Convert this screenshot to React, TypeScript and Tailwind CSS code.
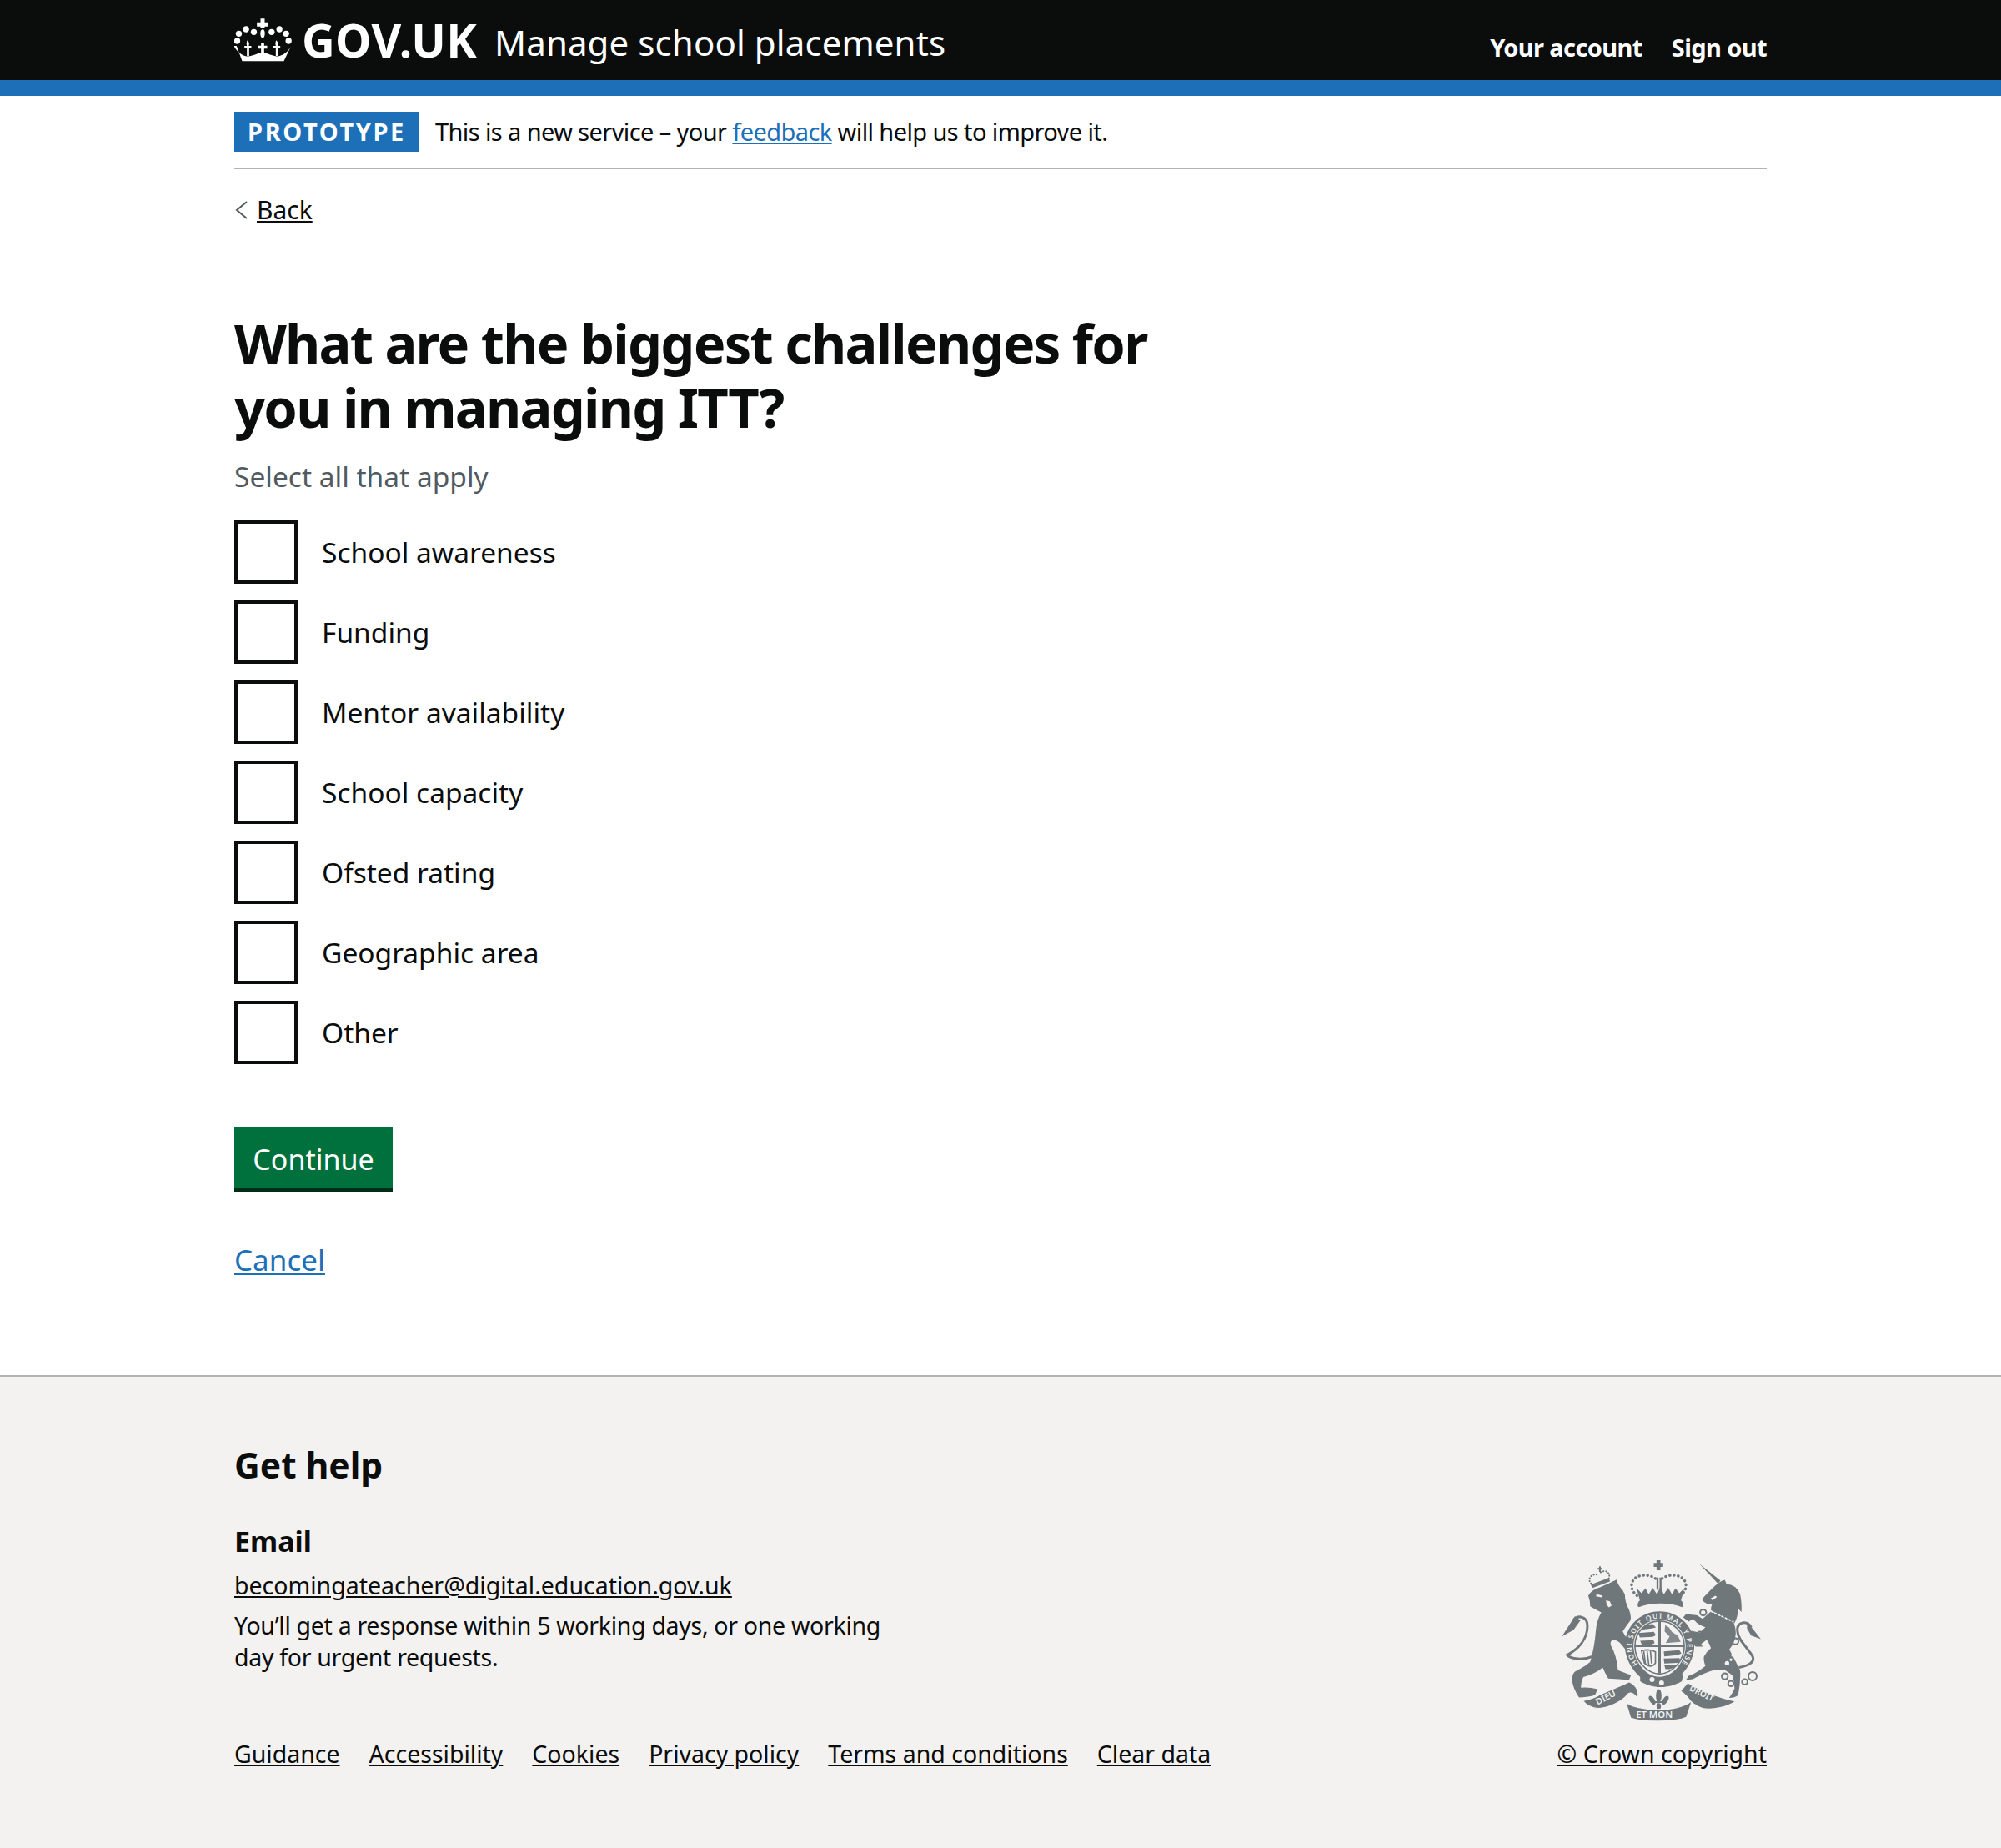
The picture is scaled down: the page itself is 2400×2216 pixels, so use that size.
import React from "react";

const options = [
  "School awareness",
  "Funding",
  "Mentor availability",
  "School capacity",
  "Ofsted rating",
  "Geographic area",
  "Other",
];

const footerLinks = [
  "Guidance",
  "Accessibility",
  "Cookies",
  "Privacy policy",
  "Terms and conditions",
  "Clear data",
];

const CrownLogo = () => (
  <svg viewBox="36 26 208 162" className="w-[71px] h-[54px] fill-white" aria-hidden="true">
    {/* top cross and jewel */}
    <path d="M128 30h15v13h13v15h-13v5h-15v-5h-13V43h13z" />
    <ellipse cx="135.5" cy="84" rx="8" ry="15" />
    <circle cx="76" cy="68" r="11" />
    <circle cx="104" cy="78" r="11" />
    <circle cx="50" cy="84" r="11" />
    <circle cx="44" cy="110" r="11" />
    <circle cx="168" cy="78" r="11" />
    <circle cx="196" cy="68" r="11" />
    <circle cx="220" cy="84" r="11" />
    <circle cx="229" cy="110" r="11" />
    {/* band */}
    <path d="M42 128l20 55h150l26-55c-10 20-25 34-50 38-16-2-34-10-53-16-18 6-36 14-52 16-24-3-40-18-51-38z" />
    {/* fleurs on the band */}
    <path d="M130 116h11v11h11v11h-11v14h-11v-14h-11v-11h11z" />
    <path d="M81 108c6 6 7 12 5 20h9v9h-8v28h-8v-28h-9v-9h9c-2-8 -2-14 2-20z" />
    <path d="M185 108c6 6 7 12 5 20h9v9h-8v28h-8v-28h-9v-9h9c-2-8 -2-14 2-20z" />
  </svg>
);

const Crest = ({ className }: { className: string }) => (
  <svg viewBox="100 78 722 592" className={className} aria-hidden="true">
    <defs>
      <path id="garterRing" d="M378 457A100 100 0 1 1 532 457" />
      <clipPath id="shieldClip">
        <path d="M366 392A89 89 0 0 1 544 392C544 444 504 490 455 494 406 490 366 444 366 392Z" />
      </clipPath>
    </defs>
    <g fill="#6f777b">
      {/* lion crown */}
      <path d="M207 172l64-24 6 12-64 24z" />
      <path d="M232 112h5v-6h6v6h6v6h-6v8h-6v-8h-5z" />
      {/* lion */}
      <path d="M198 212Q210 190 240 182 272 168 300 154 305 175 322 192L330 208Q330 235 345 262 354 285 350 300 335 320 322 340 340 370 352 395 365 420 358 432L345 428Q335 405 318 388 300 368 285 372 275 376 280 392 300 425 305 480 330 490 352 498L345 515Q310 512 270 510 258 490 250 470 225 492 180 505 170 525 172 543 200 540 232 548L222 570Q190 578 165 578 145 550 140 520 138 495 150 485 190 465 205 450 220 400 225 340 228 300 245 272 225 262 205 250 205 230 198 212Z" />
      <path d="M150 285L103 358l42-23 25-35z" />
      {/* unicorn */}
      <path d="M598 97l76 60-8 12z" />
      <path d="M668 165Q680 158 690 155L696 170Q730 172 745 205 752 240 750 270L738 258Q738 285 725 310L640 264Q640 250 645 240L625 240Q612 235 608 224 625 205 640 190 655 175 668 165Z" />
      <path d="M640 268L722 308Q738 350 720 385 712 398 706 405 725 440 745 480 748 520 738 570 725 580 705 580 720 560 725 545 722 515 718 500 700 485 690 480 670 478 650 480 615 490 575 512L550 515 560 500Q590 490 620 465 612 445 615 430 625 412 640 400 635 385 625 370L605 385 610 395 585 395Q565 375 555 355L570 338 600 345 620 325Q600 318 590 310L575 295 560 305 540 290 550 278 590 282 610 295Z" />
      <path d="M770 305l50 63-35-13-15-25z" />
      {/* big crown */}
      <path d="M444 84h14v10h10v14h-10v12h-14v-12h-10V94h10z" />
      <path d="M444 146h7v44h-7zM455 146h7v44h-7z" />
      <path d="M380 253c-8-4-2-22 4-24l-12-44 18 18 14-18 12 22 14-24 16 24 12-30 12 30 16-24 14 24 12-22 14 18 18-18-12 44c6 2 12 20 4 24-46-18-108-18-156 0z" />
      {/* fleur below the shield */}
      <ellipse cx="452" cy="572" rx="10" ry="24" />
      <ellipse cx="428" cy="588" rx="9" ry="18" transform="rotate(-32 428 588)" />
      <ellipse cx="476" cy="588" rx="9" ry="18" transform="rotate(32 476 588)" />
      <path d="M428 592h48v6h-48z" />
      <ellipse cx="452" cy="610" rx="8" ry="11" />
      {/* garter */}
      <path fillRule="evenodd" d="M455 268c70 0 125 54 125 124 0 62-56 140-125 140-70 0-125-78-125-140 0-70 55-124 125-124zm0 30c-54 0-94 42-94 94 0 50 40 112 94 112s94-62 94-112c0-52-40-94-94-94z" />
      <path d="M385 492c40 26 100 26 156 0l-6 28c-46 28-106 28-150 0z" />
    </g>
    {/* shield */}
    <path d="M366 392A89 89 0 0 1 544 392C544 444 504 490 455 494 406 490 366 444 366 392Z" fill="#f3f2f1" stroke="#6f777b" strokeWidth="5" />
    <g clipPath="url(#shieldClip)">
      <path d="M366 392h178M455 302v190" stroke="#6f777b" strokeWidth="9" fill="none" />
      <g fill="#6f777b">
        <path d="M378 318l52-4 12 12-16 4-36 4zM378 346l56-4 8 12-12 6-46 2zM385 374l48-2 4 10-12 6-34 0z" />
        <path d="M475 318l14 8 10 16 22 14 10 22-54 4 14-24-18-18z" opacity="0.85" />
        <path d="M470 412l56-4 8 12-16 6-46 4zM470 438l56-2 6 12-14 6-46 2zM472 462l40-2 4 8-24 8-16 0z" />
      </g>
      <g fill="none" stroke="#6f777b" strokeWidth="5">
        <path d="M390 410c22-6 40-2 50 4v40c-8 14-24 16-40 0z" />
        <path d="M398 412l6 46M410 410l6 50M422 410l4 46" />
      </g>
    </g>
    {/* ribbon */}
    <g fill="#6f777b" stroke="#f3f2f1" strokeWidth="4">
      <path d="M332 592C345 610 400 622 450 622 500 622 545 610 572 590L552 650C510 668 395 668 350 652Z" />
      <path d="M178 590C205 585 225 578 240 568 280 550 320 535 345 522 365 530 380 550 378 570L372 578C362 565 350 560 342 565 320 595 270 615 235 618 210 616 190 605 178 590Z" />
      <path d="M530 555L556 525C590 545 650 575 730 592 700 612 650 625 610 618 590 612 575 600 565 590 555 575 545 565 530 555Z" />
    </g>
    <g fill="#f3f2f1">
      <circle cx="428" cy="514" r="9" />
      <circle cx="462" cy="526" r="9" />
      <circle cx="720" cy="425" r="7" />
      <circle cx="698" cy="455" r="8" />
      <circle cx="712" cy="442" r="5" />
      <path d="M262 228l14 4 6 16-10 6-8-10zM228 206l22 6-4 6-20-4z" />
      <path d="M638 222l18-10 6 4-16 12z" />
    </g>
    <g fill="none" stroke="#6f777b" strokeWidth="6">
      <circle cx="612" cy="272" r="11" />
      <circle cx="600" cy="352" r="11" />
      <circle cx="690" cy="502" r="11" />
      <circle cx="712" cy="528" r="10" />
      <circle cx="762" cy="522" r="10" />
      <circle cx="790" cy="502" r="15" />
      <circle cx="728" cy="376" r="11" />
    </g>
    <g fill="none" stroke="#6f777b">
      {/* tails */}
      <path d="M215 430C180 445 135 440 122 425 160 405 195 370 195 320 195 285 160 280 145 300" strokeWidth="9" />
      <path d="M740 470C775 465 800 450 790 430 770 395 735 370 735 335 735 305 770 300 785 325" strokeWidth="9" />
      {/* crown arches, beaded */}
      <path d="M440 150c-30-22-86-14-86 26 0 14 8 26 20 36" strokeDasharray="1 14" strokeWidth="10" strokeLinecap="round" />
      <path d="M464 150c30-22 86-14 86 26 0 14-8 26-20 36" strokeDasharray="1 14" strokeWidth="10" strokeLinecap="round" />
      <path d="M208 168c-14-16 0-36 22-32M272 150c8-16-8-36-30-22" strokeDasharray="1 9" strokeWidth="6" strokeLinecap="round" />
    </g>
    <path d="M640 268l82 38" fill="none" stroke="#f3f2f1" strokeWidth="5" strokeDasharray="8 6" />
    <g fontFamily="'Noto Sans', sans-serif" fontSize="25" fill="#f3f2f1" fontWeight="600">
      <text>
        <textPath href="#garterRing" textLength="448">HONI SOIT QUI MAL Y PENSE</textPath>
      </text>
      <text x="370" y="652" fontSize="34">ET MON</text>
      <text transform="translate(232 606) rotate(-28)" fontSize="32">DIEU</text>
      <text transform="translate(560 552) rotate(26)" fontSize="30">DROIT</text>
    </g>
  </svg>
);

export default function App() {
  return (
    <div className="min-h-[2216px] flex flex-col bg-white text-[#0b0c0c] font-['Noto_Sans',sans-serif] text-[29px] leading-[38px]">
      {/* Header */}
      <header className="bg-[#0b0c0c] border-b-[19px] border-[#1d70b8]">
        <div className="w-[1838px] mx-auto h-[96px] flex items-center justify-between">
          <div className="flex items-center">
            <CrownLogo />
            <span className="ml-[10px] text-[55px] leading-none font-bold text-white tracking-[0.3px] -translate-y-[1px]">GOV.UK</span>
            <span className="ml-[21px] text-[42px] leading-none text-white tracking-[0.1px] pt-[5px]">Manage school placements</span>
          </div>
          <nav className="flex gap-[35px] pt-[18px] font-bold text-white tracking-[-0.6px]">
            <a>Your account</a>
            <a>Sign out</a>
          </nav>
        </div>
      </header>

      <main className="w-[1838px] mx-auto flex-1">
        {/* Phase banner */}
        <div className="h-[88px] border-b-[2px] border-[#b1b4b6] flex items-start pt-[19px]">
          <strong className="h-[48px] w-[222px] flex items-center justify-center bg-[#1d70b8] text-white font-bold tracking-[2.6px] text-[29px]">
            PROTOTYPE
          </strong>
          <span className="ml-[19px] mt-[5px] tracking-[-0.6px]">
            This is a new service – your{" "}
            <a className="text-[#1d70b8] underline">feedback</a> will help us to improve it.
          </span>
        </div>

        {/* Back */}
        <a className="mt-[30px] flex items-center gap-[10px] w-fit text-[30px]">
          <svg viewBox="0 0 17 26" className="w-[17px] h-[26px]" fill="none" stroke="#505a5f" strokeWidth="2">
            <path d="M15 3L3 13l12 10" />
          </svg>
          <span className="underline">Back</span>
        </a>

        {/* Question */}
        <form className="mt-[102px] w-[1180px]">
          <h1 className="text-[65px] leading-[77px] font-bold tracking-[-1.75px]">
            What are the biggest challenges for you in managing ITT?
          </h1>
          <div className="mt-[25px] text-[#505a5f] text-[33.5px]">Select all that apply</div>
          <div className="mt-[34px] flex flex-col gap-[20px] text-[33.5px]">
            {options.map((label) => (
              <label key={label} className="flex items-center h-[76px]">
                <span className="w-[76px] h-[76px] border-4 border-[#0b0c0c] bg-white" />
                <span className="ml-[29px]">{label}</span>
              </label>
            ))}
          </div>
          <button
            type="button"
            className="mt-[76px] block w-[190px] h-[77px] pt-[2px] bg-[#00703c] text-white border-b-4 border-[#002d18] text-[34px]"
          >
            Continue
          </button>
          <a className="mt-[63px] block w-fit text-[#1d70b8] underline text-[35px]">Cancel</a>
        </form>
      </main>

      {/* Footer */}
      <footer className="bg-[#f3f2f1] border-t-[2px] border-[#b1b4b6] h-[567px]">
        <div className="w-[1838px] mx-auto pt-[82px] flex justify-between items-end">
          <div>
            <h2 className="text-[42.5px] leading-[48px] font-bold">Get help</h2>
            <h3 className="mt-[48px] text-[34px] font-bold">Email</h3>
            <a className="block mt-[15px] underline text-[28.5px]">becomingateacher@digital.education.gov.uk</a>
            <p className="mt-[10px] w-[800px] text-[28.5px] tracking-[-0.3px]">
              You’ll get a response within 5 working days, or one working day for urgent requests.
            </p>
            <div className="mt-[78px] flex gap-[35px] text-[28.5px]">
              {footerLinks.map((link) => (
                <a key={link} className="underline">{link}</a>
              ))}
            </div>
          </div>
          <div className="flex flex-col items-end gap-[18px]">
            <Crest className="w-[241px] h-[197px] mr-[6px]" />
            <a className="underline text-[28.5px]">© Crown copyright</a>
          </div>
        </div>
      </footer>
    </div>
  );
}
